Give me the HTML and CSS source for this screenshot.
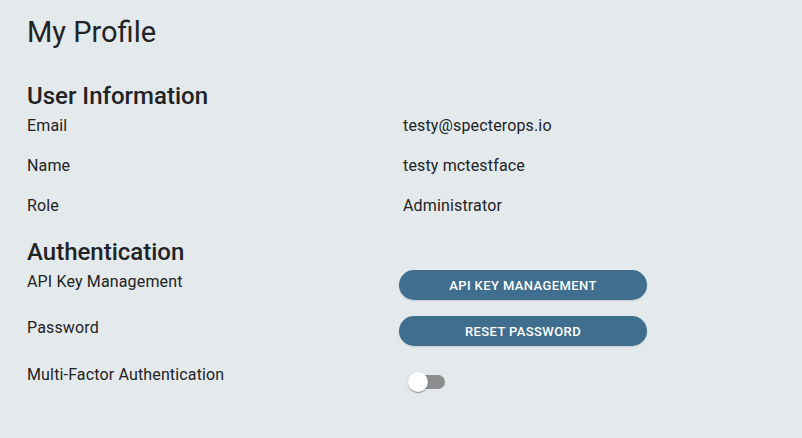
FILE: index.html
```html
<!DOCTYPE html>
<html>
<head>
<meta charset="utf-8">
<link rel="stylesheet" href="styles.css">
</head>
<body>
<main class="page">
  <h1 class="title">My Profile</h1>
  <h2 class="section">User Information</h2>
  <div class="info">
    <div class="row"><div class="label">Email</div><div class="value">testy@specterops.io</div></div>
    <div class="row"><div class="label">Name</div><div class="value">testy mctestface</div></div>
    <div class="row"><div class="label">Role</div><div class="value">Administrator</div></div>
  </div>
  <h2 class="section section-auth">Authentication</h2>
  <div class="auth">
    <div class="arow"><div class="label">API Key Management</div><button class="btn">API Key Management</button></div>
    <div class="arow"><div class="label">Password</div><button class="btn">Reset Password</button></div>
    <div class="arow arow-switch"><div class="label">Multi-Factor Authentication</div>
      <span class="switch"><span class="track"></span><span class="thumb"></span></span>
    </div>
  </div>
</main>
</body>
</html>
```
FILE: styles.css
```css
* { box-sizing: border-box; }
html, body { margin: 0; padding: 0; }
body {
  background: #e4e9ec;
  font-family: Roboto, "Liberation Sans", sans-serif;
  color: #222324;
  width: 802px;
  height: 438px;
  overflow: hidden;
}
.page {
  padding: 14px 0 0 27px;
  display: flex;
  flex-direction: column;
}
.title {
  margin: 0;
  font-size: 29px;
  line-height: 36px;
  font-weight: 400;
}
.section {
  margin: 32px 0 4px;
  font-size: 24px;
  line-height: 28px;
  font-weight: 500;
}
.section-auth { margin-top: 4px; margin-bottom: 4px; }
.info { display: flex; flex-direction: column; }
.row {
  display: grid;
  grid-template-columns: 376px 1fr;
  height: 40px;
}
.label, .value {
  font-size: 16px;
  line-height: 24px;
  letter-spacing: 0.15px;
}
.auth { display: flex; flex-direction: column; gap: 16px; }
.arow {
  display: grid;
  grid-template-columns: 372px 248px;
  align-items: start;
}
.arow-switch { margin-top: 1px; }
.btn {
  height: 30px;
  width: 248px;
  border: 0;
  border-radius: 15px;
  background: #3f6e8e;
  color: #fff;
  font-family: Roboto, "Liberation Sans", sans-serif;
  font-size: 13px;
  font-weight: 500;
  letter-spacing: 0.4px;
  text-transform: uppercase;
  padding: 0;
  box-shadow: 0 1px 2px rgba(0,0,0,0.12);
}
.switch {
  position: relative;
  display: block;
  width: 58px;
  height: 38px;
}
.track {
  position: absolute;
  left: 12px;
  top: 12px;
  width: 34px;
  height: 14px;
  border-radius: 7px;
  background: #8b8d8f;
}
.thumb {
  position: absolute;
  left: 9px;
  top: 9px;
  width: 20px;
  height: 20px;
  border-radius: 50%;
  background: #fff;
  box-shadow: 0 2px 1px -1px rgba(0,0,0,0.2), 0 1px 1px rgba(0,0,0,0.14), 0 1px 3px rgba(0,0,0,0.12);
}
```
